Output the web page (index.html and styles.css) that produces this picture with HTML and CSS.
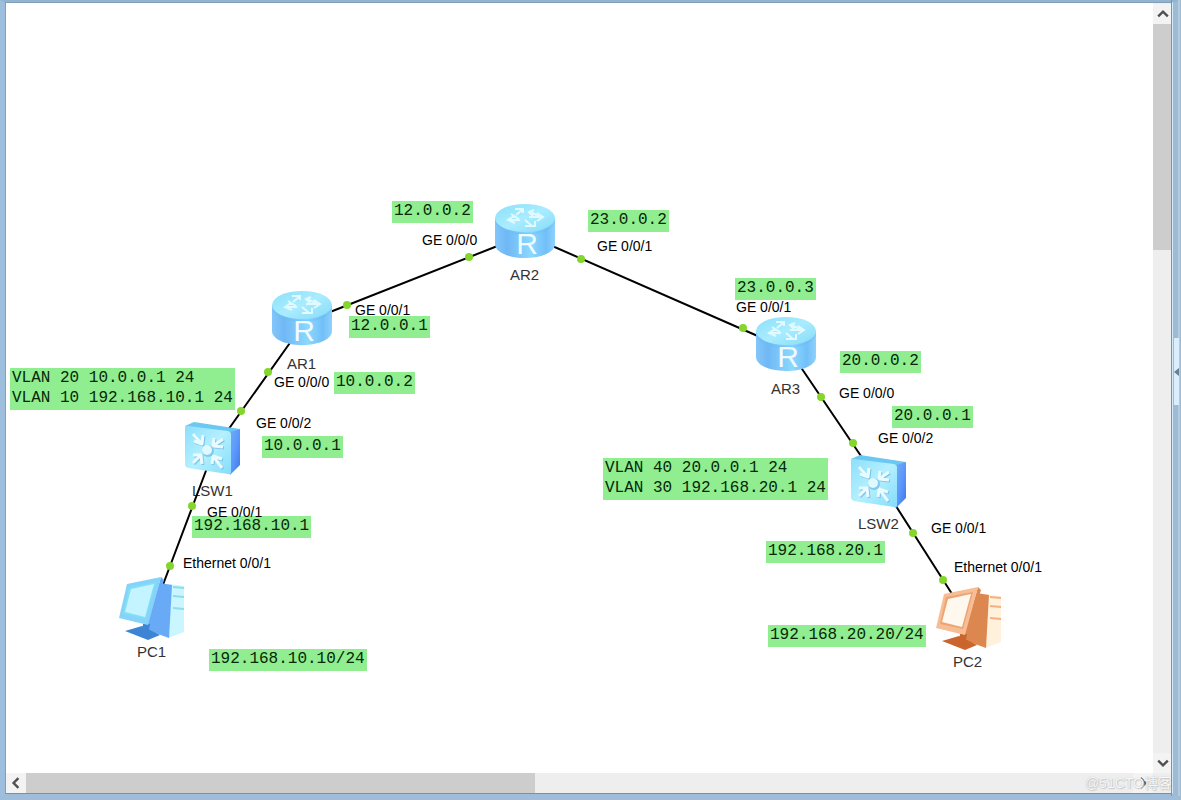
FILE: index.html
```html
<!DOCTYPE html>
<html lang="zh-CN">
<head>
<meta charset="utf-8">
<title>Network topology</title>
<link rel="stylesheet" href="styles.css">
</head>
<body>
<svg class="defs" aria-hidden="true">
  <defs>
    <linearGradient id="body" x1="0" x2="1" y1="0" y2="0">
      <stop offset="0" stop-color="#83c6fb"/><stop offset=".2" stop-color="#70b8f5"/><stop offset=".6" stop-color="#8bd8ff"/><stop offset=".85" stop-color="#72bff9"/><stop offset="1" stop-color="#8fd2fb"/>
    </linearGradient>
    <linearGradient id="lid" x1="0" x2="1" y1="0" y2="1">
      <stop offset="0" stop-color="#8be0fa"/><stop offset=".5" stop-color="#a9ecff"/><stop offset="1" stop-color="#86dbf6"/>
    </linearGradient>
    <linearGradient id="face" x1="0" x2="1" y1="0" y2="1">
      <stop offset="0" stop-color="#8cdffb"/><stop offset=".5" stop-color="#b4f0ff"/><stop offset="1" stop-color="#84dcfa"/>
    </linearGradient>
    <linearGradient id="side" x1="0" x2="1" y1="0" y2="1">
      <stop offset="0" stop-color="#6fb0ef"/><stop offset=".5" stop-color="#5b97ff"/><stop offset="1" stop-color="#3e78dc"/>
    </linearGradient>
    <symbol id="router" viewBox="0 0 60 54">
      <path d="M0 14V40C0 48 13 54 30 54S60 48 60 40V14Z" fill="url(#body)"/>
      <path d="M0 15C2 23 14 29 30 29S58 23 60 15V18C58 26 46 31 30 31S2 26 0 18Z" fill="#68bdf5" opacity=".4"/>
      <ellipse cx="30" cy="14" rx="30" ry="14" fill="url(#lid)"/>
      <g fill="none" stroke="#e0faff" stroke-width="2">
        <path d="M20 5H28V9M27 6L21 11M16 10L24 15M13 16H25M19 12L13 16L20 19"/>
        <path d="M35 8L44 12M39 6L34 8L38 12M34 13H47M42 9L48 13L42 17M30 16L37 22M30 22H40V17"/>
      </g>
      <text class="router-letter" x="32" y="50" text-anchor="middle">R</text>
    </symbol>
    <symbol id="switch" viewBox="0 0 55 53">
      <path d="M0 4L9 0L55 7L46 12Z" fill="#6ac8f2"/>
      <path d="M45 10L55 7V43L45 53Z" fill="url(#side)"/>
      <path d="M0 5Q0 3 3 4L43 9Q46 10 46 12V50Q46 53 43 52L3 46Q0 45 0 43Z" fill="url(#face)"/>
      <g fill="none" stroke="#7cc3ea" stroke-width="3" transform="translate(1 1)">
        <path d="M8 12L17 22M9 19L17 22L18 13M38 17L28 24M29 16L28 24L38 25M8 41L16 33M8 33L16 33L17 42M37 46L28 34M27 42L28 34L37 37"/>
      </g>
      <g fill="none" stroke="#e9fbff" stroke-width="3" stroke-linejoin="round">
        <path d="M8 12L17 22M9 19L17 22L18 13M38 17L28 24M29 16L28 24L38 25M8 41L16 33M8 33L16 33L17 42M37 46L28 34M27 42L28 34L37 37"/>
      </g>
      <circle cx="23" cy="29" r="6" fill="#82c9ee"/><circle cx="22" cy="28" r="5" fill="#dff9ff"/>
    </symbol>
    <symbol id="pc" viewBox="0 0 66 64">
      <path class="pc-front" d="M50 7L65 9V55L49 61Z"/>
      <path class="pc-line" d="M54 10L65 11M54 19L65 20M54 31L65 32"/>
      <path class="pc-side" d="M41 6L53 8L50 61L28 53Z"/>
      <path class="pc-dark" d="M6 54L23 49L41 58L29 63Z"/>
      <path class="pc-dark" d="M24 47H31L29 58L23 56Z"/>
      <path class="pc-side" d="M42 0L45 3L32 46L28 48Z"/>
      <path class="pc-frame" d="M8 7L42 0L29 48L0 41Z"/>
      <path class="pc-bezel" d="M10 10L37 5L27 42L4 37Z"/>
      <path class="pc-screen" d="M12 12L35 7L26 40L6 35Z"/>
    </symbol>
  </defs>
</svg>

<div class="window">
  <main class="viewport">
    <svg class="links" aria-hidden="true">
      <g transform="translate(-6 -3)">
        <g class="wire">
          <path d="M325 314L500 245M550 245L760 337M292 340L228 430M207 468L161 590M798 363L863 459M894 503L954 597"/>
        </g>
        <g class="port">
          <circle cx="347" cy="305" r="4"/><circle cx="469" cy="257" r="4"/>
          <circle cx="581" cy="259" r="4"/><circle cx="743" cy="328" r="4"/>
          <circle cx="268" cy="372" r="4"/><circle cx="241" cy="411" r="4"/>
          <circle cx="192" cy="506" r="4"/><circle cx="170" cy="566" r="4"/>
          <circle cx="821" cy="397" r="4"/><circle cx="853" cy="443" r="4"/>
          <circle cx="913" cy="533" r="4"/><circle cx="943" cy="580" r="4"/>
        </g>
      </g>
    </svg>

    <svg class="icon router ar1"><use href="#router"/></svg>
    <svg class="icon router ar2"><use href="#router"/></svg>
    <svg class="icon router ar3"><use href="#router"/></svg>
    <svg class="icon switch lsw1"><use href="#switch"/></svg>
    <svg class="icon switch lsw2"><use href="#switch"/></svg>
    <svg class="icon pc pc1"><use href="#pc"/></svg>
    <svg class="icon pc pc2"><use href="#pc"/></svg>

    <span class="name name-ar1">AR1</span>
    <span class="name name-ar2">AR2</span>
    <span class="name name-ar3">AR3</span>
    <span class="name name-lsw1">LSW1</span>
    <span class="name name-lsw2">LSW2</span>
    <span class="name name-pc1">PC1</span>
    <span class="name name-pc2">PC2</span>

    <span class="note note-ar2-left">12.0.0.2</span>
    <span class="note note-ar2-right">23.0.0.2</span>
    <span class="note note-ar1-right">12.0.0.1</span>
    <span class="note note-ar1-down">10.0.0.2</span>
    <span class="note note-vlan1">VLAN 20 10.0.0.1 24<br>VLAN 10 192.168.10.1 24</span>
    <span class="note note-lsw1-up">10.0.0.1</span>
    <span class="note note-lsw1-down">192.168.10.1</span>
    <span class="note note-pc1">192.168.10.10/24</span>
    <span class="note note-ar3-left">23.0.0.3</span>
    <span class="note note-ar3-down">20.0.0.2</span>
    <span class="note note-lsw2-up">20.0.0.1</span>
    <span class="note note-vlan2">VLAN 40 20.0.0.1 24<br>VLAN 30 192.168.20.1 24</span>
    <span class="note note-lsw2-down">192.168.20.1</span>
    <span class="note note-pc2">192.168.20.20/24</span>

    <span class="if if-ar2-left">GE 0/0/0</span>
    <span class="if if-ar2-right">GE 0/0/1</span>
    <span class="if if-ar1-right">GE 0/0/1</span>
    <span class="if if-ar1-down">GE 0/0/0</span>
    <span class="if if-lsw1-up">GE 0/0/2</span>
    <span class="if if-lsw1-down">GE 0/0/1</span>
    <span class="if if-pc1">Ethernet 0/0/1</span>
    <span class="if if-ar3-left">GE 0/0/1</span>
    <span class="if if-ar3-down">GE 0/0/0</span>
    <span class="if if-lsw2-up">GE 0/0/2</span>
    <span class="if if-lsw2-down">GE 0/0/1</span>
    <span class="if if-pc2">Ethernet 0/0/1</span>
  </main>

  <div class="scrollbar vertical">
    <button class="arrow" aria-label="Scroll up"><svg viewBox="0 0 10 10"><path d="M1 7L5 3L9 7"/></svg></button>
    <div class="track"><div class="thumb"></div></div>
    <button class="arrow" aria-label="Scroll down"><svg viewBox="0 0 10 10"><path d="M1 3L5 7L9 3"/></svg></button>
  </div>
  <div class="scrollbar horizontal">
    <button class="arrow" aria-label="Scroll left"><svg viewBox="0 0 10 10"><path d="M7 1L3 5L7 9"/></svg></button>
    <div class="track"><div class="thumb"></div></div>
    <button class="arrow" aria-label="Scroll right"><svg viewBox="0 0 10 10"><path d="M3 1L7 5L3 9"/></svg></button>
  </div>
  <div class="corner"></div>
  <button class="splitter" aria-label="Expand panel"><svg viewBox="0 0 5 8"><path d="M5 0V8L0 4Z"/></svg></button>
  <span class="watermark">@51CTO博客</span>
</div>
</body>
</html>
```
FILE: styles.css
```css
* { box-sizing: border-box; }

body {
  margin: 0;
  font-family: "Liberation Sans", "Noto Sans CJK SC", sans-serif;
  background: #a5c0da;
}

.defs { position: absolute; width: 0; height: 0; }

.window {
  position: relative;
  display: grid;
  grid-template: minmax(0, 1fr) 20px / minmax(0, 1fr) 19px;
  height: 100vh;
  border-style: solid;
  border-width: 3px 9px 7px 6px;
  border-color: #93b3cf #9dbbd5 #9fbdd8 #9dbfdd;
  background: #fff;
}

.window::before {
  content: "";
  position: absolute;
  inset: -1px;
  border: 1px solid #7f9fbb;
  border-right: 2px solid #d5eafa;
  border-bottom-color: #6f93b3;
  pointer-events: none;
}

.window::after {
  content: "";
  position: absolute;
  inset: -3px -8px -3px auto;
  width: 6px;
  border-left: 1px solid #7893aa;
  border-right: 2px solid #b5cadb;
  pointer-events: none;
}

.viewport { position: relative; overflow: hidden; background: #fff; }

/* Topology canvas */
.links { position: absolute; inset: 0; width: 100%; height: 100%; z-index: 1; }
.wire { fill: none; stroke: #000; stroke-width: 2; }
.port { fill: #84d62c; }

.icon { position: absolute; z-index: 2; }
.router { width: 60px; height: 54px; }
.switch { width: 55px; height: 53px; }
.pc { width: 66px; height: 64px; }
.router-letter { font: 30px "Liberation Sans", sans-serif; fill: #effbff; }

.pc { --front: #c9f6ff; --line: #8edcec; --side: #68aaf6; --dark: #3d85d4; --frame: #86d3f9; --bezel: #80dff5; --screen: #c3f4ff; }
.pc2 { --front: #fff1dc; --line: #f2b083; --side: #dd8750; --dark: #c9652d; --frame: #f7bd94; --bezel: #eda474; --screen: #fff8ef; }
.pc-front { fill: var(--front); }
.pc-line { fill: none; stroke: var(--line); stroke-width: 2; }
.pc-side { fill: var(--side); }
.pc-dark { fill: var(--dark); }
.pc-frame { fill: var(--frame); }
.pc-bezel { fill: var(--bezel); }
.pc-screen { fill: var(--screen); }

.ar1 { left: 266px; top: 288px; }
.ar2 { left: 489px; top: 201px; }
.ar3 { left: 750px; top: 314px; }
.lsw1 { left: 179px; top: 419px; }
.lsw2 { left: 845px; top: 452px; }
.pc1 { left: 113px; top: 574px; }
.pc2 { left: 930px; top: 584px; }

.name, .if, .note { position: absolute; white-space: nowrap; }
.name { font-size: 15px; line-height: 16px; color: #333; }
.if { z-index: 3; font-size: 14px; line-height: 16px; color: #000; }
.note {
  padding: 0 2px 2px;
  background: #90ee90;
  color: #062806;
  font-family: "Liberation Mono", monospace;
  font-size: 16px;
  line-height: 20px;
}

.name-ar1 { left: 281px; top: 353px; }
.name-ar2 { left: 504px; top: 264px; }
.name-ar3 { left: 765px; top: 378px; }
.name-lsw1 { left: 186px; top: 480px; }
.name-lsw2 { left: 852px; top: 513px; }
.name-pc1 { left: 131px; top: 641px; }
.name-pc2 { left: 947px; top: 651px; }

.note-ar2-left { left: 386px; top: 198px; }
.note-ar2-right { left: 582px; top: 207px; }
.note-ar1-right { left: 343px; top: 313px; }
.note-ar1-down { left: 328px; top: 369px; }
.note-vlan1 { left: 4px; top: 365px; }
.note-lsw1-up { left: 256px; top: 433px; }
.note-lsw1-down { left: 186px; top: 513px; }
.note-pc1 { left: 203px; top: 646px; }
.note-ar3-left { left: 729px; top: 275px; }
.note-ar3-down { left: 834px; top: 348px; }
.note-lsw2-up { left: 886px; top: 403px; }
.note-vlan2 { left: 597px; top: 455px; }
.note-lsw2-down { left: 760px; top: 538px; }
.note-pc2 { left: 762px; top: 622px; }

.if-ar2-left { left: 416px; top: 229px; }
.if-ar2-right { left: 591px; top: 235px; }
.if-ar1-right { left: 349px; top: 299px; }
.if-ar1-down { left: 268px; top: 371px; }
.if-lsw1-up { left: 250px; top: 412px; }
.if-lsw1-down { left: 201px; top: 501px; }
.if-pc1 { left: 177px; top: 552px; }
.if-ar3-left { left: 730px; top: 296px; }
.if-ar3-down { left: 833px; top: 382px; }
.if-lsw2-up { left: 872px; top: 427px; }
.if-lsw2-down { left: 925px; top: 517px; }
.if-pc2 { left: 948px; top: 556px; }

/* Scrollbars */
.scrollbar { display: flex; background: #eee; }
.vertical { flex-direction: column; padding-top: 1px; }
.track { flex: 1; }
.thumb { background: #cdcdcd; }
.vertical .thumb { width: 100%; height: 31%; }
.horizontal .thumb { width: 46%; height: 100%; }
.corner { background: #eee; }
.arrow {
  display: grid;
  place-items: center;
  flex: none;
  width: 20px;
  height: 20px;
  padding: 0;
  border: 0;
  background: #f3f3f3;
}
.vertical .arrow { width: 19px; }
.arrow svg { width: 12px; height: 12px; fill: none; stroke: #505050; stroke-width: 2; }

.splitter {
  position: absolute;
  z-index: 1;
  top: calc(50% - 60px);
  right: -7px;
  display: grid;
  place-items: center;
  width: 5px;
  height: 67px;
  padding: 0;
  border: 0;
  background: #dcedfb;
}
.splitter svg { width: 5px; height: 8px; fill: #667f94; }

.watermark {
  position: absolute;
  right: 0;
  bottom: 0;
  font-size: 14px;
  line-height: 20px;
  color: #f8f8f8;
  text-shadow: 0 0 1px #aaa, 1px 1px 1px #ccc;
}
```
